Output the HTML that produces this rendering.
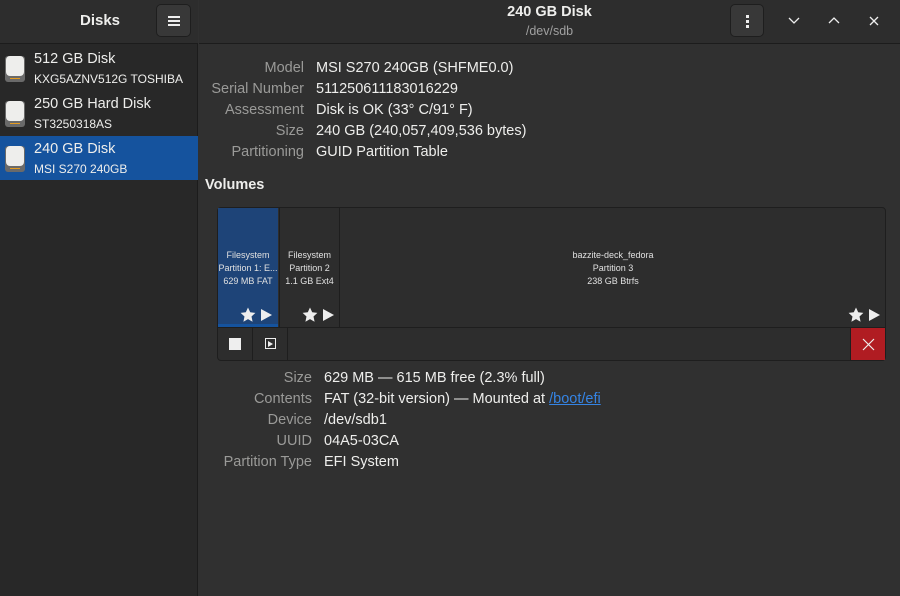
<!DOCTYPE html>
<html><head><meta charset="utf-8"><style>
*{margin:0;padding:0;box-sizing:border-box}
body{width:900px;height:596px;background:#303030;font-family:"Liberation Sans","DejaVu Sans",sans-serif;color:#eeeeec;position:relative;overflow:hidden}
.side{position:absolute;left:0;top:0;width:198px;height:596px;background:#282828;border-right:1px solid #1c1c1c}
.shead{position:absolute;left:0;top:0;width:198px;height:44px;background:#2d2d2d;border-bottom:1px solid #1c1c1c}
.mhead{position:absolute;left:199px;top:0;width:701px;height:44px;background:#2d2d2d;border-bottom:1px solid #1c1c1c}
.btn{position:absolute;background:#383838;border:1px solid #1e1e1e;border-radius:5px}
.item{position:absolute;left:0;width:198px;height:44px}
.item .t{position:absolute;left:34px;top:5px;font-size:14.5px}
.item .s{position:absolute;left:34px;top:26px;font-size:12px}
.icon{position:absolute;left:5px;top:10px;width:20px;height:26px;background:#6a6a6a;border-radius:3px}
.icon:before{content:"";position:absolute;left:1px;top:0;width:18px;height:20px;background:#eeeeec;border-radius:4px}
.icon:after{content:"";position:absolute;left:5px;top:22px;width:10px;height:1px;background:#e59b20}
.lbl{position:absolute;font-size:14.5px;color:#9a9a98;text-align:right}
.val{position:absolute;font-size:14.5px;color:#eeeeec}
.part{position:absolute;top:208px;height:119px;font-size:9px;text-align:center;line-height:13px;color:#e0e0e0}
.sa{position:absolute;top:307px}
</style></head><body>
<div class="side"></div>
<div class="shead"><div style="position:absolute;left:80px;top:12px;font-weight:bold;font-size:15px">Disks</div>
<div class="btn" style="left:156px;top:4px;width:35px;height:33px"><div style="position:absolute;left:11px;top:11px;width:12px;height:2px;background:#eee;box-shadow:0 4px 0 #eee,0 8px 0 #eee"></div></div></div>
<div class="item" style="top:46px"><div class="icon"></div><div class="t">512 GB Disk</div><div class="s">KXG5AZNV512G TOSHIBA</div></div>
<div class="item" style="top:91px"><div class="icon"></div><div class="t">250 GB Hard Disk</div><div class="s">ST3250318AS</div></div>
<div class="item" style="top:136px;background:#15539e"><div class="icon"></div><div class="t">240 GB Disk</div><div class="s">MSI S270 240GB</div></div>
<div class="mhead">
<div style="position:absolute;left:0;width:701px;top:4px;text-align:center;font-weight:bold;font-size:14.5px">240 GB Disk</div>
<div style="position:absolute;left:0;width:701px;top:24px;text-align:center;font-size:12.5px;color:#a0a0a0">/dev/sdb</div>
<div class="btn" style="left:531px;top:4px;width:34px;height:33px"><div style="position:absolute;left:15px;top:10px;width:3px;height:3px;background:#eee;box-shadow:0 5px 0 #eee,0 10px 0 #eee"></div></div>
<svg style="position:absolute;left:588px;top:14px" width="14" height="14"><path d="M2 4l5 5 5-5" stroke="#eee" fill="none" stroke-width="1.3"/></svg>
<svg style="position:absolute;left:628px;top:14px" width="14" height="14"><path d="M2 9l5-5 5 5" stroke="#eee" fill="none" stroke-width="1.3"/></svg>
<svg style="position:absolute;left:668px;top:14px" width="14" height="14"><path d="M3 3l8 8M11 3l-8 8" stroke="#eee" fill="none" stroke-width="1.3"/></svg>
</div>
<div class="lbl" style="right:596px;top:60px">Model</div><div class="val" style="left:316px;top:60px">MSI S270 240GB (SHFME0.0)</div>
<div class="lbl" style="right:596px;top:81px">Serial Number</div><div class="val" style="left:316px;top:81px">511250611183016229</div>
<div class="lbl" style="right:596px;top:102px">Assessment</div><div class="val" style="left:316px;top:102px">Disk is OK (33° C/91° F)</div>
<div class="lbl" style="right:596px;top:123px">Size</div><div class="val" style="left:316px;top:123px">240 GB (240,057,409,536 bytes)</div>
<div class="lbl" style="right:596px;top:144px">Partitioning</div><div class="val" style="left:316px;top:144px">GUID Partition Table</div>
<div style="position:absolute;left:205px;top:177px;font-weight:bold;font-size:14.5px">Volumes</div>
<div style="position:absolute;left:217px;top:207px;width:669px;height:154px;border:1px solid #1e1e1e;border-radius:4px;background:#2d2d2d"></div>
<div class="part" style="left:218px;width:60px;background:#1e4478;border-bottom:3px solid #15539e;padding-top:41px">Filesystem<br>Partition 1: E...<br>629 MB FAT</div>
<div class="part" style="left:279px;width:61px;border-left:1px solid #1e1e1e;border-right:1px solid #1e1e1e;padding-top:41px">Filesystem<br>Partition 2<br>1.1 GB Ext4</div>
<div class="part" style="left:341px;width:544px;padding-top:41px">bazzite-deck_fedora<br>Partition 3<br>238 GB Btrfs</div>
<svg class="sa" style="left:240px" width="34" height="16"><path d="M8 0.5l2.2 4.8 5.2.6-3.9 3.6 1.1 5.2L8 12.1 3.4 14.7l1.1-5.2L.6 5.9l5.2-.6z" fill="#eee"/><path d="M21 2v12l11-6z" fill="#eee"/></svg>
<svg class="sa" style="left:302px" width="34" height="16"><path d="M8 0.5l2.2 4.8 5.2.6-3.9 3.6 1.1 5.2L8 12.1 3.4 14.7l1.1-5.2L.6 5.9l5.2-.6z" fill="#eee"/><path d="M21 2v12l11-6z" fill="#eee"/></svg>
<svg class="sa" style="left:848px" width="34" height="16"><path d="M8 0.5l2.2 4.8 5.2.6-3.9 3.6 1.1 5.2L8 12.1 3.4 14.7l1.1-5.2L.6 5.9l5.2-.6z" fill="#eee"/><path d="M21 2v12l11-6z" fill="#eee"/></svg>
<div style="position:absolute;left:218px;top:327px;width:667px;height:1px;background:#1e1e1e"></div>
<div style="position:absolute;left:218px;top:328px;width:35px;height:32px;border-right:1px solid #1e1e1e"><div style="position:absolute;left:11px;top:10px;width:12px;height:12px;background:#eee"></div></div>
<div style="position:absolute;left:253px;top:328px;width:35px;height:32px;border-right:1px solid #1e1e1e"><div style="position:absolute;left:12px;top:10px;width:11px;height:11px;border:1px solid #eee"><div style="position:absolute;left:2px;top:2px;border-left:5px solid #eee;border-top:3px solid transparent;border-bottom:3px solid transparent"></div></div></div>
<div style="position:absolute;left:850px;top:328px;width:35px;height:32px;background:#b01c22;border-left:1px solid #1e1e1e"><svg style="position:absolute;left:11px;top:10px" width="13" height="13"><path d="M1 1l11 11M12 1l-11 11" stroke="#eee" stroke-width="1.2"/></svg></div>
<div class="lbl" style="right:588px;top:370px">Size</div><div class="val" style="left:324px;top:370px">629 MB — 615 MB free (2.3% full)</div>
<div class="lbl" style="right:588px;top:391px">Contents</div><div class="val" style="left:324px;top:391px">FAT (32-bit version) — Mounted at <span style="color:#3584e4;text-decoration:underline">/boot/efi</span></div>
<div class="lbl" style="right:588px;top:412px">Device</div><div class="val" style="left:324px;top:412px">/dev/sdb1</div>
<div class="lbl" style="right:588px;top:433px">UUID</div><div class="val" style="left:324px;top:433px">04A5-03CA</div>
<div class="lbl" style="right:588px;top:454px">Partition Type</div><div class="val" style="left:324px;top:454px">EFI System</div>
</body></html>
